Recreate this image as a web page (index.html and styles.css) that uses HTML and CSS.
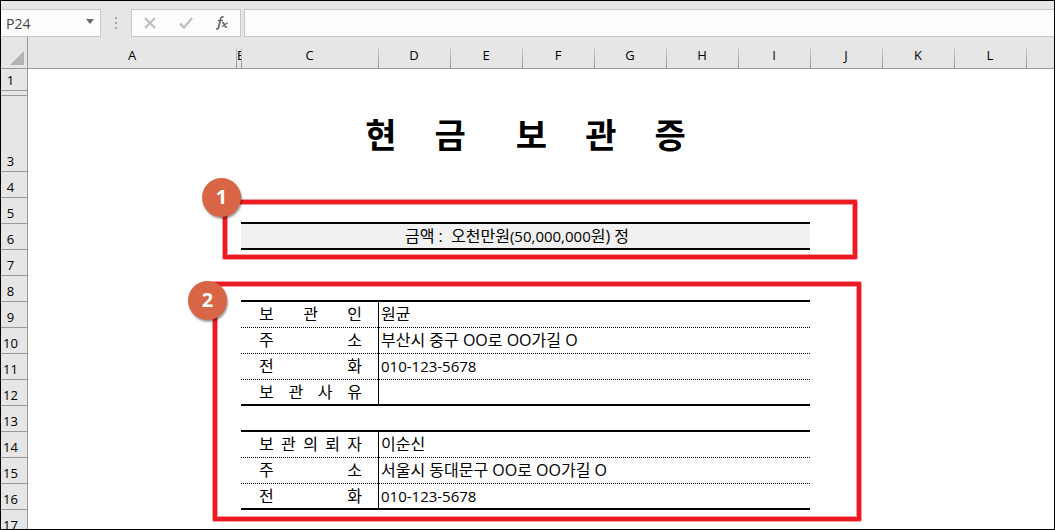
FILE: index.html
```html
<!DOCTYPE html>
<html lang="ko">
<head>
<meta charset="utf-8">
<title>현금 보관증</title>
<link rel="stylesheet" href="styles.css">
</head>
<body>
<main class="window">
  <header class="formula-row">
    <div class="name-box">
      <input class="name-input" type="text" value="P24" aria-label="이름 상자">
      <button class="name-arrow" type="button" aria-label="이름 목록">
        <svg width="8" height="5" viewBox="0 0 8 5"><path d="M0 0h8L4 5z" fill="#6a6a6a"/></svg>
      </button>
    </div>
    <div class="grip"><i></i><i></i><i></i></div>
    <div class="actions">
      <button type="button" aria-label="취소"><svg width="12" height="12" viewBox="0 0 12 12"><path d="M1 1l10 10M11 1L1 11" stroke="#bdbdbd" stroke-width="2" fill="none"/></svg></button>
      <button type="button" aria-label="입력"><svg width="14" height="12" viewBox="0 0 14 12"><path d="M1 6.500l4 4L13 1" stroke="#c2c2c2" stroke-width="2.500" fill="none"/></svg></button>
      <button type="button" class="fx" aria-label="함수 삽입"><svg width="14" height="14" viewBox="0 0 14 14" fill="none" stroke="#666"><path d="M8.500 1.600C7.600 .4 6.200 .8 5.700 2.600L3.700 11C3.300 12.800 2.200 13.400 1 12.700" stroke-width="1.700"/><path d="M3 4.500h5" stroke-width="1.300"/><path d="M7 7.200c1.500-1 2 .1 2.500 1.800s1 2.600 2.600 1.700" stroke-width="1.500"/><path d="M12.800 6.900c-1.600-.4-4 3.900-6 3.700" stroke-width="1.200"/></svg></button>
    </div>
    <input class="formula-input" type="text" aria-label="수식 입력줄">
  </header>

  <section class="sheet">
    <table class="grid">
      <colgroup>
        <col class="w-head"><col class="w-a"><col class="w-b"><col class="w-c">
        <col class="w-n"><col class="w-n"><col class="w-n"><col class="w-n"><col class="w-n"><col class="w-n"><col class="w-n"><col class="w-n"><col class="w-n"><col>
      </colgroup>
      <thead>
        <tr>
          <th class="corner"><svg width="14" height="14" viewBox="0 0 14 14"><path d="M14 0v14H0z" fill="#b4b4b4"/></svg></th>
          <th class="first">A</th><th class="narrow">B</th><th>C</th><th>D</th><th>E</th><th>F</th><th>G</th><th>H</th><th>I</th><th>J</th><th>K</th><th>L</th><th></th>
        </tr>
      </thead>
      <tbody>
        <tr class="r-first"><th>1</th><td colspan="13"></td></tr>
        <tr class="r-thin"><th></th><td colspan="13"></td></tr>
        <tr class="r-title"><th>3</th><td colspan="2"></td><td colspan="7"><h1 class="title"><span>현</span><span>금</span><span class="word">보</span><span>관</span><span>증</span></h1></td><td colspan="4"></td></tr>
        <tr><th>4</th><td colspan="13"></td></tr>
        <tr><th>5</th><td colspan="2"></td><td colspan="7" class="thick"></td><td colspan="4"></td></tr>
        <tr><th>6</th><td colspan="2"></td><td colspan="7" class="thick amount">금액 :&nbsp; 오천만원<span class="num">(50,000,000</span>원) 정</td><td colspan="4"></td></tr>
        <tr><th>7</th><td colspan="13"></td></tr>
        <tr><th>8</th><td colspan="2"></td><td colspan="7" class="thick"></td><td colspan="4"></td></tr>
        <tr><th>9</th><td colspan="2"></td><td class="label dots">보 관 인</td><td colspan="6" class="value dots">원균</td><td colspan="4"></td></tr>
        <tr><th>10</th><td colspan="2"></td><td class="label dots">주 소</td><td colspan="6" class="value dots">부산시 중구 OO로 OO가길 O</td><td colspan="4"></td></tr>
        <tr><th>11</th><td colspan="2"></td><td class="label dots">전 화</td><td colspan="6" class="value dots"><span class="num">010-123-5678</span></td><td colspan="4"></td></tr>
        <tr><th>12</th><td colspan="2"></td><td class="label thick">보 관 사 유</td><td colspan="6" class="value thick"></td><td colspan="4"></td></tr>
        <tr><th>13</th><td colspan="2"></td><td colspan="7" class="thick"></td><td colspan="4"></td></tr>
        <tr><th>14</th><td colspan="2"></td><td class="label dots">보 관 의 뢰 자</td><td colspan="6" class="value dots">이순신</td><td colspan="4"></td></tr>
        <tr><th>15</th><td colspan="2"></td><td class="label dots">주 소</td><td colspan="6" class="value dots">서울시 동대문구 OO로 OO가길 O</td><td colspan="4"></td></tr>
        <tr><th>16</th><td colspan="2"></td><td class="label thick">전 화</td><td colspan="6" class="value thick"><span class="num">010-123-5678</span></td><td colspan="4"></td></tr>
        <tr><th>17</th><td colspan="13"></td></tr>
      </tbody>
    </table>
    <div class="callout callout-amount"></div>
    <div class="callout callout-parties"></div>
    <span class="badge badge-amount">1</span>
    <span class="badge badge-parties">2</span>
  </section>
</main>
</body>
</html>
```
FILE: styles.css
```css
* { box-sizing: border-box; }

body {
  margin: 0;
  font-family: "Open Sans", "Noto Sans CJK KR", sans-serif;
  color: #000;
}

.window {
  display: flex;
  flex-direction: column;
  height: 100vh;
  border: 1px solid #000;
  background: #fff;
  overflow: hidden;
}

/* Formula bar */
.formula-row {
  display: flex;
  flex: none;
  padding-top: 8px;
  background: #e6e6e6;
}

.name-box {
  display: flex;
  align-items: center;
  width: 100px;
  height: 28px;
  border: 1px solid #c6c6c6;
  border-left: 0;
  background: #fdfdfd;
}

.name-input {
  flex: 1;
  min-width: 0;
  padding: 0 0 0 5px;
  border: 0;
  background: none;
  font: 14px "Open Sans", sans-serif;
  color: #444;
}

.name-arrow {
  display: flex;
  padding: 0 6px 4px;
  border: 0;
  background: none;
}

.grip {
  display: flex;
  flex-direction: column;
  align-items: center;
  justify-content: center;
  gap: 3px;
  width: 30px;
}

.grip i {
  width: 2px;
  height: 2px;
  background: #a6a6a6;
}

.actions {
  display: flex;
  width: 110px;
  margin-right: 3px;
  border: 1px solid #c6c6c6;
  background: #fdfdfd;
}

.actions button {
  display: flex;
  flex: 1;
  align-items: center;
  justify-content: center;
  padding: 0;
  border: 0;
  background: none;
}

.formula-input {
  flex: 1;
  min-width: 0;
  border: 1px solid #c6c6c6;
  border-right: 0;
  background: #fdfdfd;
  font: 14px "Open Sans", sans-serif;
}

/* Sheet */
.sheet {
  position: relative;
  flex: 1;
  min-height: 0;
}

.grid {
  width: 100%;
  table-layout: fixed;
  border-collapse: separate;
  border-spacing: 0;
}

.w-head { width: 27px; }
.w-a { width: 208px; }
.w-b { width: 5px; }
.w-c { width: 137px; }
.w-n { width: 72px; }

th, td { padding: 0; }

th {
  background-color: #e6e6e6;
  font-size: 13px;
  font-weight: 400;
  line-height: 16px;
}

thead th {
  height: 32px;
  padding-top: 4px;
  border-bottom: 1px solid #999;
  background-image: linear-gradient(#cfcfcf, #909090);
  background-position: left bottom;
  background-repeat: no-repeat;
  background-size: 1px 21px;
  overflow: hidden;
}

thead .first { background-image: none; }

thead .narrow {
  padding-left: 1px;
  text-align: left;
}

thead .corner {
  padding: 0 3px 3px 0;
  border-right: 1px solid #999;
  background-image: none;
  text-align: right;
  vertical-align: bottom;
}

.corner svg { display: block; margin-left: auto; }

tbody tr { height: 26px; }
tbody .r-first { height: 22px; }
tbody .r-thin { height: 5px; }
tbody .r-title { height: 76px; }

tbody th {
  padding: 0 7px 2px 0;
  border-right: 1px solid #999;
  border-bottom: 1px solid #999;
  vertical-align: bottom;
}

tbody .r-thin th { padding: 0; }

td {
  font-size: 16px;
  line-height: 24px;
  white-space: nowrap;
}

.title {
  display: flex;
  justify-content: center;
  gap: 38px;
  margin: 0;
  padding-top: 2px;
  font-size: 34px;
  line-height: 48px;
  font-weight: 700;
}

.title .word { margin-left: 12px; }

.thick { border-bottom: 2px solid #000; }
.dots { border-bottom: 1px dotted #000; }

.amount {
  padding-right: 17px;
  background: #f1f1f1;
  text-align: center;
}

.num { font-size: 15px; }

.label,
.value { vertical-align: top; }

.label {
  padding: 0 16px 0 18px;
  text-align: justify;
  text-align-last: justify;
}

.value {
  padding-left: 2px;
  border-left: 1px solid #000;
}

/* Annotations laid over the sheet */
.callout {
  position: absolute;
  border: 4px solid #ed1c24;
  border-radius: 1px;
  box-shadow: 0 0 0 1px rgba(237, 28, 36, 0.45), inset 0 0 0 1px rgba(237, 28, 36, 0.45);
}

.callout-amount {
  left: 222px;
  top: 163px;
  width: 634px;
  height: 59px;
}

.callout-parties {
  left: 212px;
  top: 245px;
  width: 648px;
  height: 239px;
}

.badge {
  position: absolute;
  width: 39px;
  height: 39px;
  border-radius: 50%;
  background: #d96547;
  box-shadow: 1px 2px 2px rgba(0, 0, 0, 0.4);
  color: #fff;
  font-size: 20px;
  font-weight: 700;
  line-height: 38px;
  text-align: center;
}

.badge-amount { left: 201px; top: 141px; }
.badge-parties { left: 187px; top: 244px; }
```
